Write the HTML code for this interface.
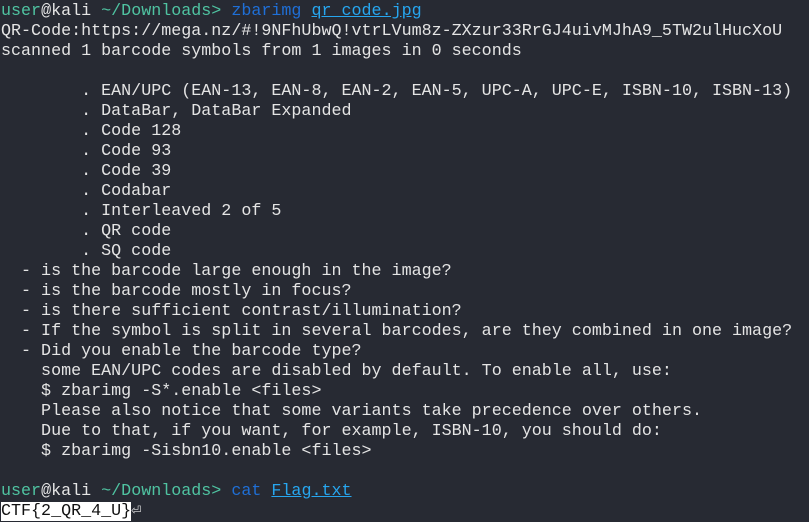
<!DOCTYPE html>
<html><head><style>
html,body{margin:0;padding:0;background:#272a33;width:809px;height:522px;overflow:hidden}
pre{margin:0;padding:2px 0 0 1px;font-family:"Liberation Mono","DejaVu Sans Mono",monospace;font-size:16.7px;line-height:20px;color:#e4e4e4;white-space:pre}
.g{color:#4fc3a1}.b{color:#1f6fd6}.l{color:#27a6ef;text-decoration:underline}
.f{background:#fff;color:#111}
</style></head><body><pre><span class="g">user</span>@kali <span class="g">~/Downloads&gt;</span> <span class="b">zbarimg</span> <span class="l">qr_code.jpg</span>
QR-Code:https://mega.nz/#!9NFhUbwQ!vtrLVum8z-ZXzur33RrGJ4uivMJhA9_5TW2ulHucXoU
scanned 1 barcode symbols from 1 images in 0 seconds

        . EAN/UPC (EAN-13, EAN-8, EAN-2, EAN-5, UPC-A, UPC-E, ISBN-10, ISBN-13)
        . DataBar, DataBar Expanded
        . Code 128
        . Code 93
        . Code 39
        . Codabar
        . Interleaved 2 of 5
        . QR code
        . SQ code
  - is the barcode large enough in the image?
  - is the barcode mostly in focus?
  - is there sufficient contrast/illumination?
  - If the symbol is split in several barcodes, are they combined in one image?
  - Did you enable the barcode type?
    some EAN/UPC codes are disabled by default. To enable all, use:
    $ zbarimg -S*.enable &lt;files&gt;
    Please also notice that some variants take precedence over others.
    Due to that, if you want, for example, ISBN-10, you should do:
    $ zbarimg -Sisbn10.enable &lt;files&gt;

<span class="g">user</span>@kali <span class="g">~/Downloads&gt;</span> <span class="b">cat</span> <span class="l">Flag.txt</span>
<span class="f">CTF{2_QR_4_U}</span>⏎</pre></body></html>
